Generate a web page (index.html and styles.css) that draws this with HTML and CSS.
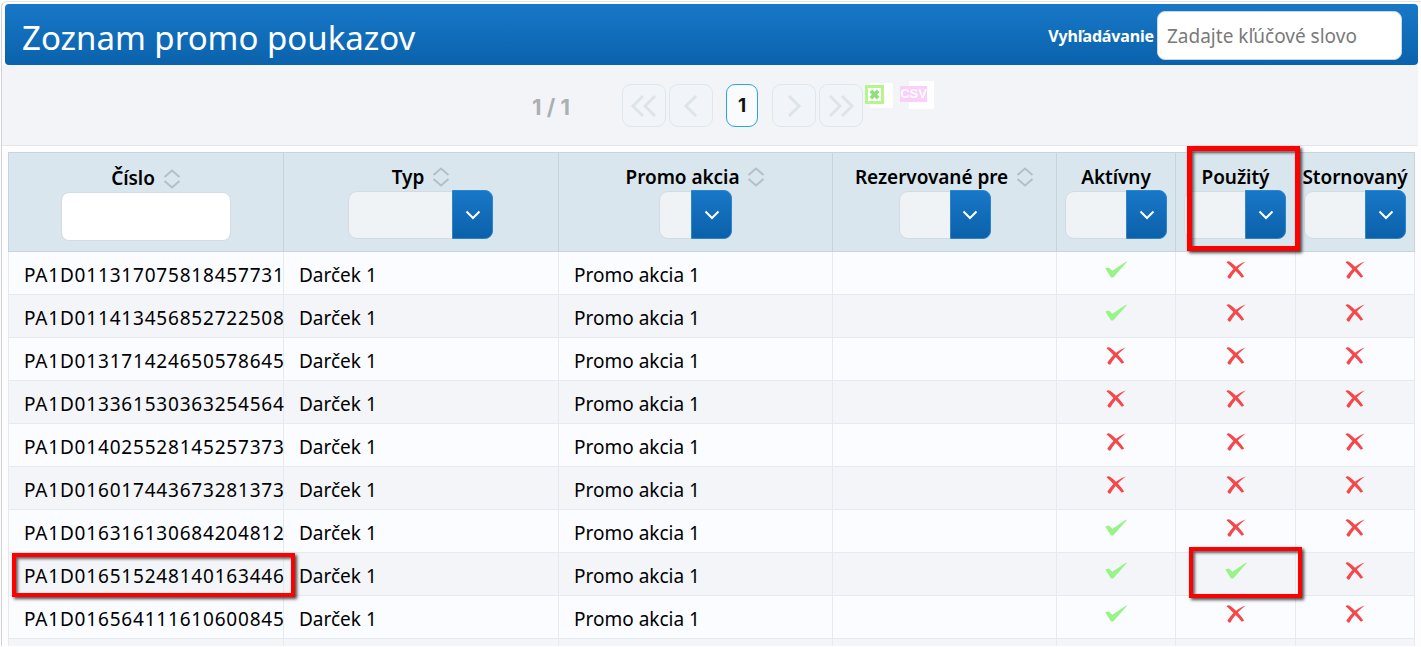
FILE: index.html
```html
<!DOCTYPE html>
<html lang="sk">
<head>
<meta charset="utf-8">
<title>Zoznam promo poukazov</title>
<link rel="stylesheet" href="styles.css">
</head>
<body>
<svg class="sprite" width="0" height="0" aria-hidden="true">
  <symbol id="yes" viewBox="0 0 22 17"><path d="M.3 7.6 3.8 6.4 7.4 9.8 21.2 .4 21.7 1.2 8.2 16.6 6 16.6Z"/></symbol>
  <symbol id="no" viewBox="0 0 20 18"><path d="M.5 1.2C1.6 .1 3.2 .2 4.4 .9 6.4 2.2 8.4 3.9 10 5.7 13 3.4 16 1.5 19.8 .4 16.8 2.6 14 5 11.8 7.6 14 10 16.2 12.6 18.2 15.4L15.8 16.8C13.9 14.6 11.8 12.3 9.7 10.1 7.7 12.4 6 14.8 4.4 17.6 3 17.8 1.8 17 1.4 15.6 3 12.9 5.1 10.4 7.4 8 5.2 5.6 2.8 3.4 .5 1.2Z"/></symbol>
  <symbol id="sort" viewBox="0 0 18 20"><path d="M1.5 8 9 1.5 16.5 8M1.5 12 9 18.5 16.5 12"/></symbol>
  <symbol id="caret" viewBox="0 0 16 10"><path d="M1.5 1.5 8 8 14.5 1.5"/></symbol>
</svg>
<main class="wrap">
  <header class="bar">
    <h1 class="title">Zoznam promo poukazov</h1>
    <label class="search-label" for="q">Vyhľadávanie</label>
    <input class="search" id="q" type="text" placeholder="Zadajte kľúčové slovo">
  </header>

  <nav class="pager">
    <span class="count">1 / 1</span>
    <button class="pg first"><svg viewBox="0 0 30 24"><path d="M14 2 4 12 14 22M26 2 16 12 26 22"/></svg></button>
    <button class="pg"><svg viewBox="0 0 30 24"><path d="M20 2 10 12 20 22"/></svg></button>
    <button class="pg current">1</button>
    <button class="pg"><svg viewBox="0 0 30 24"><path d="M10 2 20 12 10 22"/></svg></button>
    <button class="pg"><svg viewBox="0 0 30 24"><path d="M4 2 14 12 4 22M16 2 26 12 16 22"/></svg></button>
    <span class="export xls"><span class="xls-box"><svg viewBox="0 0 12 12"><path d="M2 2 10 10M10 2 2 10"/></svg></span></span>
    <span class="export csv"><span class="csv-box">CSV</span></span>
  </nav>

  <table class="grid">
    <colgroup>
      <col class="c1"><col class="c2"><col class="c3"><col class="c4"><col class="c5"><col class="c6"><col class="c7">
    </colgroup>
    <thead>
      <tr>
        <th><div class="th-label th-low">Číslo <svg class="sort"><use href="#sort"/></svg></div><input class="filter-input" type="text"></th>
        <th><div class="th-label">Typ <svg class="sort"><use href="#sort"/></svg></div><div class="dd dd-typ"><span class="dd-btn"><svg><use href="#caret"/></svg></span></div></th>
        <th><div class="th-label">Promo akcia <svg class="sort"><use href="#sort"/></svg></div><div class="dd dd-promo"><span class="dd-btn"><svg><use href="#caret"/></svg></span></div></th>
        <th><div class="th-label">Rezervované pre <svg class="sort"><use href="#sort"/></svg></div><div class="dd dd-rez"><span class="dd-btn"><svg><use href="#caret"/></svg></span></div></th>
        <th><div class="th-label">Aktívny</div><div class="dd"><span class="dd-btn"><svg><use href="#caret"/></svg></span></div></th>
        <th><div class="th-label">Použitý</div><div class="dd dd-used"><span class="dd-btn"><svg><use href="#caret"/></svg></span></div></th>
        <th><div class="th-label">Stornovaný</div><div class="dd"><span class="dd-btn"><svg><use href="#caret"/></svg></span></div></th>
      </tr>
    </thead>
    <tbody>
      <tr><td class="code">PA1D011317075818457731</td><td>Darček 1</td><td>Promo akcia 1</td><td></td><td class="flag"><svg class="yes"><use href="#yes"/></svg></td><td class="flag"><svg class="no"><use href="#no"/></svg></td><td class="flag"><svg class="no"><use href="#no"/></svg></td></tr>
      <tr><td class="code">PA1D011413456852722508</td><td>Darček 1</td><td>Promo akcia 1</td><td></td><td class="flag"><svg class="yes"><use href="#yes"/></svg></td><td class="flag"><svg class="no"><use href="#no"/></svg></td><td class="flag"><svg class="no"><use href="#no"/></svg></td></tr>
      <tr><td class="code">PA1D013171424650578645</td><td>Darček 1</td><td>Promo akcia 1</td><td></td><td class="flag"><svg class="no"><use href="#no"/></svg></td><td class="flag"><svg class="no"><use href="#no"/></svg></td><td class="flag"><svg class="no"><use href="#no"/></svg></td></tr>
      <tr><td class="code">PA1D013361530363254564</td><td>Darček 1</td><td>Promo akcia 1</td><td></td><td class="flag"><svg class="no"><use href="#no"/></svg></td><td class="flag"><svg class="no"><use href="#no"/></svg></td><td class="flag"><svg class="no"><use href="#no"/></svg></td></tr>
      <tr><td class="code">PA1D014025528145257373</td><td>Darček 1</td><td>Promo akcia 1</td><td></td><td class="flag"><svg class="no"><use href="#no"/></svg></td><td class="flag"><svg class="no"><use href="#no"/></svg></td><td class="flag"><svg class="no"><use href="#no"/></svg></td></tr>
      <tr><td class="code">PA1D016017443673281373</td><td>Darček 1</td><td>Promo akcia 1</td><td></td><td class="flag"><svg class="no"><use href="#no"/></svg></td><td class="flag"><svg class="no"><use href="#no"/></svg></td><td class="flag"><svg class="no"><use href="#no"/></svg></td></tr>
      <tr><td class="code">PA1D016316130684204812</td><td>Darček 1</td><td>Promo akcia 1</td><td></td><td class="flag"><svg class="yes"><use href="#yes"/></svg></td><td class="flag"><svg class="no"><use href="#no"/></svg></td><td class="flag"><svg class="no"><use href="#no"/></svg></td></tr>
      <tr><td class="code">PA1D016515248140163446</td><td>Darček 1</td><td>Promo akcia 1</td><td></td><td class="flag"><svg class="yes"><use href="#yes"/></svg></td><td class="flag"><svg class="yes"><use href="#yes"/></svg></td><td class="flag"><svg class="no"><use href="#no"/></svg></td></tr>
      <tr><td class="code">PA1D016564111610600845</td><td>Darček 1</td><td>Promo akcia 1</td><td></td><td class="flag"><svg class="yes"><use href="#yes"/></svg></td><td class="flag"><svg class="no"><use href="#no"/></svg></td><td class="flag"><svg class="no"><use href="#no"/></svg></td></tr>
      <tr><td class="code"></td><td></td><td></td><td></td><td class="flag"></td><td class="flag"></td><td class="flag"></td></tr>
    </tbody>
  </table>
</main>
<div class="mark mark-head"></div>
<div class="mark mark-code"></div>
<div class="mark mark-used"></div>
</body>
</html>
```

FILE: styles.css
```css
html, body { margin: 0; height: 647px; overflow: hidden; background: #fdfdfe; }
body { position: relative; font-family: "Noto Sans", sans-serif; color: #111; }
.sprite { position: absolute; }

.wrap {
  margin: 1px 0 0 1px;
  padding: 2px 3px 0 3px;
  border-left: 1px solid #cfd3d6;
  border-top: 1px solid #e2e5e8;
  border-top-left-radius: 6px;
  height: 645px;
  overflow: hidden;
  box-sizing: border-box;
}

/* title bar */
.bar {
  display: flex;
  align-items: center;
  height: 61px;
  width: 1413px;
  box-sizing: border-box;
  padding: 0 16px 0 17px;
  background: linear-gradient(#1778c8, #0b62ac);
  border-radius: 4px;
}
.title {
  flex: 1;
  margin: 0;
  padding-top: 5px;
  font-size: 33px;
  font-weight: 400;
  color: #fff;
  line-height: 1;
}
.search-label {
  padding-top: 3px;
  font-size: 16px;
  font-weight: 700;
  letter-spacing: -.15px;
  color: #fff;
  margin-right: 3px;
}
.search {
  width: 245px;
  height: 49px;
  margin-top: 2px;
  box-sizing: border-box;
  padding: 0 9px;
  border: 1px solid #cdd6de;
  border-radius: 8px;
  background: #fff;
  font: 19px "Noto Sans", sans-serif;
}
.search::placeholder { color: #7a7a7a; opacity: 1; }

/* pager strip */
.pager {
  display: flex;
  align-items: flex-start;
  height: 81px;
  width: 1416px;
  margin-left: -3px;
  box-sizing: border-box;
  padding: 19px 0 0 530px;
  background: #f3f4f7;
  border-bottom: 1px solid #e3e6ea;
}
.count {
  width: 90px;
  margin-top: 11px;
  font: 700 22px/24px Inter, sans-serif;
  color: #a9b0b3;
}
.pg {
  width: 44px;
  height: 43px;
  margin-right: 3px;
  padding: 0;
  display: flex;
  align-items: center;
  justify-content: center;
  background: #f1f4f8;
  border: 1px solid #dfe7ee;
  border-radius: 9px;
}
.pg svg { width: 30px; height: 24px; fill: none; stroke: #dde5e9; stroke-width: 3; }
.pg.current {
  width: 32px;
  margin: 0 14px 0 10px;
  background: #f9fbfc;
  border-color: #2aa5e6;
  font: 700 19px Inter, sans-serif;
  color: #111;
}
.pg:nth-of-type(5) { margin-right: 0; }
.export { display: block; position: relative; background: #fff; filter: blur(.5px); }
.xls { width: 23px; height: 25px; margin: -1px 0 0 7px; }
.xls-box {
  position: absolute;
  left: -5px; top: 2px;
  width: 19px; height: 19px;
  box-sizing: border-box;
  border: 3px solid #b6f48e;
  display: flex;
  align-items: center;
  justify-content: center;
  background: #fff;
}
.xls-box svg { width: 11px; height: 11px; fill: none; stroke: #8fe07a; stroke-width: 4; }
.csv { width: 25px; height: 28px; margin: -3px 0 0 16px; }
.csv-box {
  position: absolute;
  left: -9px; top: 5px;
  width: 27px; height: 16px;
  background: #f8d0f8;
  color: #fff;
  font: 700 13px/16px "Liberation Sans", sans-serif;
  text-align: center;
}

/* table */
.grid {
  table-layout: fixed;
  border-collapse: collapse;
  width: 1406px;
  margin: 6px 0 0 3px;
}
.c1, .c2 { width: 275px; }
.c3 { width: 274px; }
.c4 { width: 224px; }
.c5, .c7 { width: 119px; }
.c6 { width: 120px; }

th {
  height: 99px;
  box-sizing: border-box;
  padding: 10px 0 0;
  vertical-align: top;
  background: #d9e6ee;
  border: 1px solid #c7d4dd;
  font-weight: 600;
  text-align: center;
}
.th-label {
  display: flex;
  align-items: center;
  justify-content: center;
  gap: 8px;
  height: 28px;
  font-size: 19px;
  font-weight: 600;
  letter-spacing: -.05px;
  color: #000;
  white-space: nowrap;
}
.th-low { padding-top: 1px; height: 27px; line-height: 1; margin-top: 1px; }
.sort { width: 18px; height: 20px; fill: none; stroke: #b5bfc5; stroke-width: 2; }
.filter-input {
  display: block;
  width: 170px;
  height: 49px;
  margin: 0 auto;
  box-sizing: border-box;
  border: 1px solid #d4dbe1;
  border-radius: 8px;
  background: #fff;
}
.dd {
  display: flex;
  justify-content: flex-end;
  width: 102px;
  height: 48px;
  margin: 0 auto;
  box-sizing: border-box;
  border: 1px solid #d3dbe1;
  border-radius: 9px;
  background: #eff3f6;
}
.dd-typ { width: 145px; margin-left: 64px; }
.dd-promo { width: 73px; }
.dd-rez { width: 92px; }
.dd-used { margin-left: 8px; }
.dd-btn {
  display: flex;
  align-items: center;
  justify-content: center;
  width: 41px;
  height: 49px;
  margin: -2px -1px 0 0;
  box-sizing: border-box;
  background: linear-gradient(#1878c8, #0c60aa);
  border: 1px solid #2b86cc;
  border-radius: 0 8px 8px 0;
}
.dd-btn svg { width: 16px; height: 10px; fill: none; stroke: #fff; stroke-width: 2; }

td {
  height: 43px;
  box-sizing: border-box;
  padding: 3px 0 0 15px;
  border: 1px solid #e5e9f0;
  font-size: 19px;
  color: #000;
  white-space: nowrap;
  overflow: hidden;
  background: #fbfcff;
}
tbody tr:nth-child(even) td { background: #f3f5f9; }
td.code { letter-spacing: .8px; overflow: visible; }
td.flag { padding: 0; text-align: center; vertical-align: top; }
.yes, .no { display: block; margin: 9px auto 0; filter: blur(.5px); }
.yes { width: 22px; height: 17px; fill: #98f486; }
.no { width: 20px; height: 18px; fill: #f6484b; }

/* annotation frames over the screenshot */
.mark {
  position: absolute;
  box-sizing: border-box;
  border: 4px solid #f00;
  box-shadow: 2px 2px 3px rgba(0,0,0,.7), inset 2px 2px 3px rgba(0,0,0,.6);
}
.mark-head { left: 1187px; top: 146px; width: 113px; height: 105px; border-width: 5px; }
.mark-code { left: 12px; top: 553px; width: 283px; height: 44px; }
.mark-used { left: 1189px; top: 547px; width: 113px; height: 51px; }
```
